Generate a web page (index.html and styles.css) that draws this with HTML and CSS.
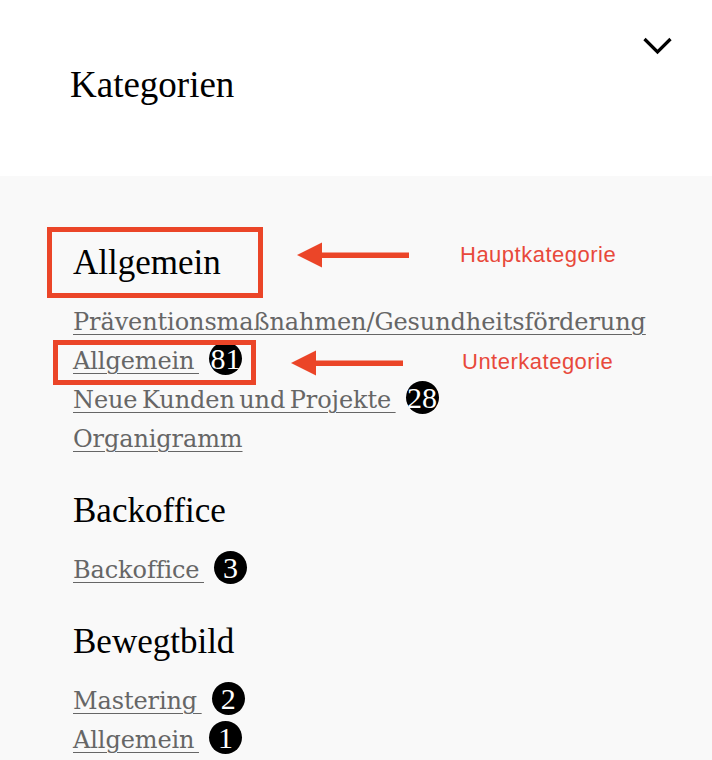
FILE: index.html
```html
<!DOCTYPE html>
<html lang="de">
<head>
<meta charset="utf-8">
<title>Kategorien</title>
<link rel="stylesheet" href="styles.css">
</head>
<body>
<div class="page">
  <header class="head">
    <h1 class="title">Kategorien</h1>
    <svg class="chevron" width="36" height="22" viewBox="0 0 36 22" aria-hidden="true">
      <polyline points="4.5,4 17.5,17 30.5,4" fill="none" stroke="#000" stroke-width="3.2" stroke-linejoin="miter"/>
    </svg>
  </header>
  <main class="cats">
    <section class="group">
      <h2 class="group-title">Allgemein</h2>
      <ul class="links">
        <li><a href="#">Präventionsmaßnahmen/Gesundheitsförderung</a></li>
        <li><a href="#">Allgemein </a><span class="badge">81</span></li>
        <li><a href="#">Neue Kunden und Projekte </a><span class="badge">28</span></li>
        <li><a href="#">Organigramm</a></li>
      </ul>
    </section>
    <section class="group">
      <h2 class="group-title">Backoffice</h2>
      <ul class="links">
        <li><a href="#">Backoffice </a><span class="badge">3</span></li>
      </ul>
    </section>
    <section class="group">
      <h2 class="group-title">Bewegtbild</h2>
      <ul class="links">
        <li><a href="#">Mastering </a><span class="badge">2</span></li>
        <li><a href="#">Allgemein </a><span class="badge">1</span></li>
      </ul>
    </section>
  </main>

  <div class="mark mark-main"></div>
  <div class="mark mark-sub"></div>
  <svg class="arrow arrow-main" width="120" height="30" viewBox="0 0 120 30" aria-hidden="true">
    <polygon points="0,14 25,1.5 25,26.5" fill="#eb4528"/>
    <rect x="24" y="11.5" width="88" height="5.5" fill="#eb4528"/>
  </svg>
  <svg class="arrow arrow-sub" width="120" height="30" viewBox="0 0 120 30" aria-hidden="true">
    <polygon points="0,14 25,1.5 25,26.5" fill="#eb4528"/>
    <rect x="24" y="11.5" width="88" height="5.5" fill="#eb4528"/>
  </svg>
  <span class="label label-main">Hauptkategorie</span>
  <span class="label label-sub">Unterkategorie</span>
</div>
</body>
</html>
```
FILE: styles.css
```css
html, body {
  margin: 0;
  padding: 0;
  background: #f9f9f9;
}

.page {
  position: relative;
  width: 712px;
  height: 760px;
  overflow: hidden;
}

.head {
  height: 176px;
  background: #ffffff;
  display: flex;
  justify-content: space-between;
  align-items: flex-start;
  padding: 0 36px 0 70px;
  box-sizing: border-box;
}

.title {
  margin: 63px 0 0;
  font-family: "Liberation Serif", "Times New Roman", serif;
  font-weight: 400;
  font-size: 37px;
  line-height: 44px;
  color: #000;
}

.chevron {
  display: block;
  margin-top: 35px;
}

.cats {
  padding: 65px 73px 0;
  background: #f9f9f9;
}

.group + .group {
  margin-top: 30px;
}

.group-title {
  margin: 0 0 18px;
  font-family: "Liberation Serif", "Times New Roman", serif;
  font-weight: 400;
  font-size: 35px;
  line-height: 44px;
  color: #000;
}

.links {
  list-style: none;
  margin: 0;
  padding: 0;
}

.links li {
  font-family: "DejaVu Serif", serif;
  font-size: 24px;
  line-height: 39px;
  letter-spacing: -0.1px;
  word-spacing: -3px;
  white-space: nowrap;
}

.links a {
  color: #666666;
  text-decoration: underline;
  text-decoration-thickness: 1px;
  text-underline-offset: 4px;
}

.badge {
  display: inline-flex;
  justify-content: center;
  align-items: center;
  vertical-align: top;
  width: 33px;
  height: 33px;
  margin-left: 10px;
  border-radius: 50%;
  background: #000;
  color: #fff;
  font-family: "Liberation Serif", "Times New Roman", serif;
  font-size: 30px;
  line-height: 33px;
  letter-spacing: 0;
}

.mark {
  position: absolute;
  box-sizing: border-box;
  border: 5px solid #eb4528;
}

.mark-main {
  left: 47px;
  top: 227px;
  width: 216px;
  height: 71px;
}

.mark-sub {
  left: 53px;
  top: 340px;
  width: 203px;
  height: 45px;
}

.arrow {
  position: absolute;
  display: block;
}

.arrow-main {
  left: 297px;
  top: 241px;
}

.arrow-sub {
  left: 291px;
  top: 349px;
}

.label {
  position: absolute;
  font-family: "Liberation Sans", Arial, sans-serif;
  font-size: 22px;
  line-height: 22px;
  letter-spacing: 0.5px;
  color: #e8493b;
  white-space: nowrap;
}

.label-main {
  left: 460px;
  top: 244px;
}

.label-sub {
  left: 462px;
  top: 351px;
}
```
